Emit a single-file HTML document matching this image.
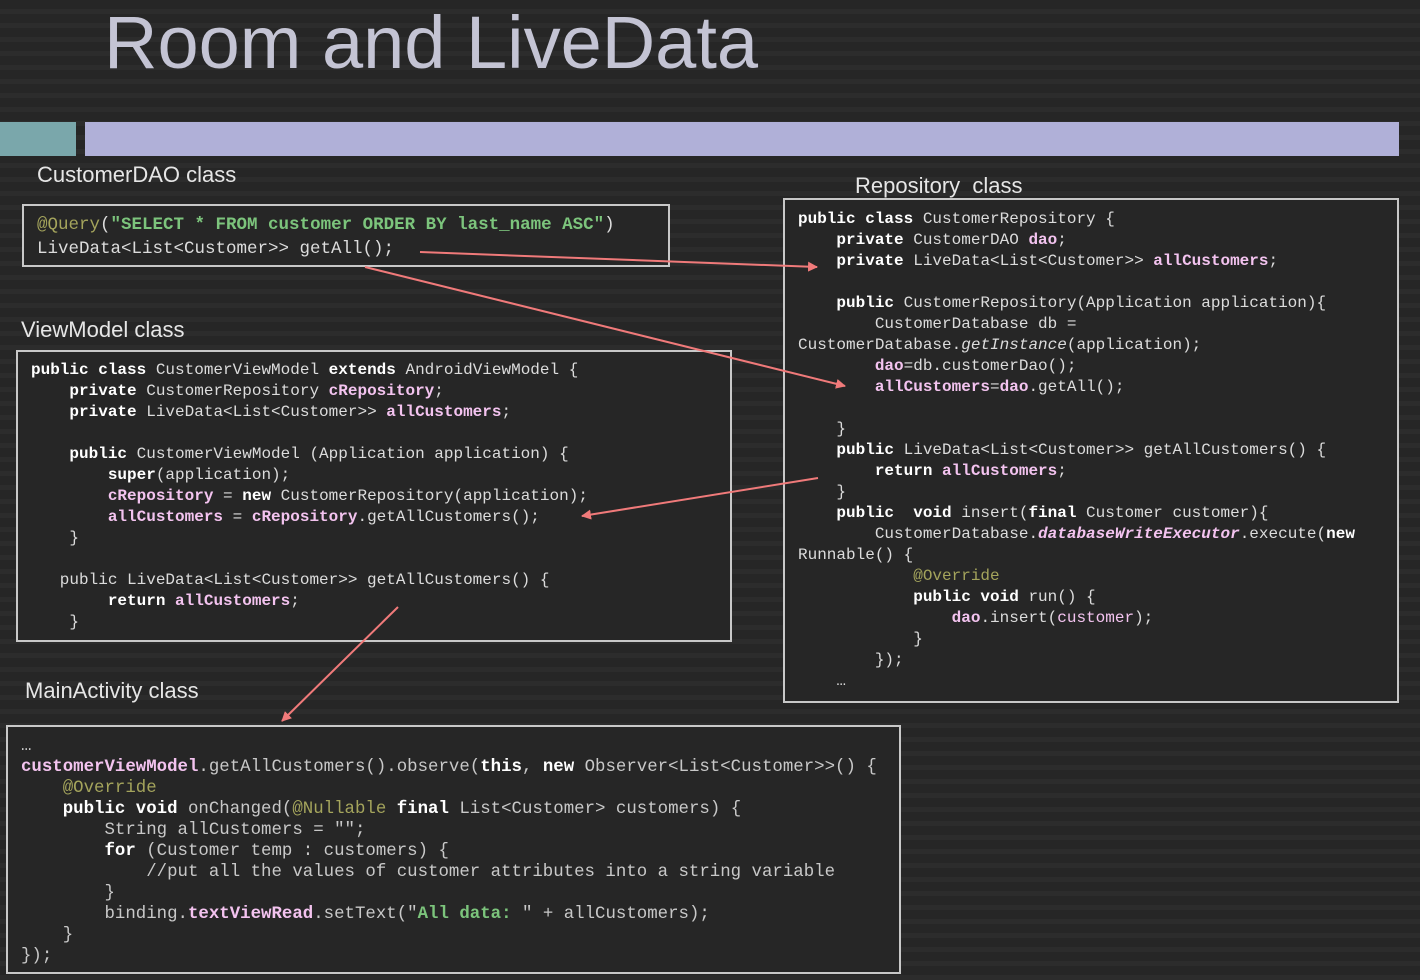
<!DOCTYPE html>
<html><head><meta charset="utf-8"><style>
*{margin:0;padding:0;box-sizing:border-box}
body{width:1420px;height:980px;overflow:hidden;position:relative;
background:repeating-linear-gradient(to bottom,#262626 0px,#262626 9px,#2c2c2c 9px,#2c2c2c 14px);
font-family:"Liberation Sans",sans-serif;}
.title{position:absolute;left:104px;top:0px;font-size:74px;color:#c4c4d4;letter-spacing:0px;white-space:nowrap}
.h{position:absolute;font-size:22px;color:#e6e6e6;white-space:nowrap}
.box{position:absolute;border:2px solid #c8c8c8;background:#262626}
.l{position:absolute;white-space:pre;font-family:"Liberation Mono",monospace;font-size:16px;line-height:21px;color:#dcdcdc}
.m{font-size:17.4px;color:#c8c8c8}
b{color:#fff}
.p{color:#f3c3ef}
.pb{color:#f3c3ef;font-weight:bold}
.g{color:#7cc47c;font-weight:bold}
.a{color:#a4a45c}
i{font-style:italic}
</style></head><body>
<div class="title">Room and LiveData</div>
<div style="position:absolute;left:0;top:122px;width:76px;height:34px;background:#7aa7ab"></div>
<div style="position:absolute;left:85px;top:122px;width:1314px;height:34px;background:#b0b0d8"></div>

<div class="h" style="left:37px;top:162px">CustomerDAO class</div>
<div class="h" style="left:855px;top:173px">Repository&nbsp; class</div>
<div class="h" style="left:21px;top:317px">ViewModel class</div>
<div class="h" style="left:25px;top:678px">MainActivity class</div>

<div class="box" style="left:22px;top:204px;width:648px;height:63px"></div>
<div class="box" style="left:16px;top:350px;width:716px;height:292px"></div>
<div class="box" style="left:783px;top:198px;width:616px;height:505px"></div>
<div class="box" style="left:6px;top:725px;width:895px;height:249px"></div>

<div class="l" style="left:37px;top:213px;font-size:17.5px;line-height:24px"><span class="a">@Query</span>(<span class="g">"SELECT * FROM customer ORDER BY last_name ASC"</span>)
LiveData&lt;List&lt;Customer&gt;&gt; getAll();</div>

<div class="l" style="left:31px;top:360px"><b>public class</b> CustomerViewModel <b>extends</b> AndroidViewModel {
    <b>private</b> CustomerRepository <span class="pb">cRepository</span>;
    <b>private</b> LiveData&lt;List&lt;Customer&gt;&gt; <span class="pb">allCustomers</span>;

    <b>public</b> CustomerViewModel (Application application) {
        <b>super</b>(application);
        <span class="pb">cRepository</span> = <b>new</b> CustomerRepository(application);
        <span class="pb">allCustomers</span> = <span class="pb">cRepository</span>.getAllCustomers();
    }

   public LiveData&lt;List&lt;Customer&gt;&gt; getAllCustomers() {
        <b>return</b> <span class="pb">allCustomers</span>;
    }</div>

<div class="l" style="left:798px;top:209px"><b>public class</b> CustomerRepository {
    <b>private</b> CustomerDAO <span class="pb">dao</span>;
    <b>private</b> LiveData&lt;List&lt;Customer&gt;&gt; <span class="pb">allCustomers</span>;

    <b>public</b> CustomerRepository(Application application){
        CustomerDatabase db =
CustomerDatabase.<i>getInstance</i>(application);
        <span class="pb">dao</span>=db.customerDao();
        <span class="pb">allCustomers</span>=<span class="pb">dao</span>.getAll();

    }
    <b>public</b> LiveData&lt;List&lt;Customer&gt;&gt; getAllCustomers() {
        <b>return</b> <span class="pb">allCustomers</span>;
    }
    <b>public</b>  <b>void</b> insert(<b>final</b> Customer customer){
        CustomerDatabase.<i class="pb">databaseWriteExecutor</i>.execute(<b>new</b>
Runnable() {
            <span class="a">@Override</span>
            <b>public void</b> run() {
                <span class="pb">dao</span>.insert(<span class="p">customer</span>);
            }
        });
    …</div>

<div class="l m" style="left:21px;top:736px">…
<span class="pb">customerViewModel</span>.getAllCustomers().observe(<b>this</b>, <b>new</b> Observer&lt;List&lt;Customer&gt;&gt;() {
    <span class="a">@Override</span>
    <b>public void</b> onChanged(<span class="a">@Nullable</span> <b>final</b> List&lt;Customer&gt; customers) {
        String allCustomers = "";
        <b>for</b> (Customer temp : customers) {
            //put all the values of customer attributes into a string variable
        }
        binding.<span class="pb">textViewRead</span>.setText("<span class="g">All data: </span>" + allCustomers);
    }
});</div>

<svg style="position:absolute;left:0;top:0" width="1420" height="980">
<defs><marker id="ar" markerWidth="10" markerHeight="10" refX="9" refY="5" orient="auto" markerUnits="userSpaceOnUse"><path d="M0,0 L10,5 L0,10 z" fill="#f07a7a"/></marker></defs>
<g stroke="#f07a7a" stroke-width="2" fill="none">
<line x1="420" y1="252" x2="817" y2="267" marker-end="url(#ar)"/>
<line x1="365" y1="267" x2="845" y2="386" marker-end="url(#ar)"/>
<line x1="818" y1="478" x2="582" y2="516" marker-end="url(#ar)"/>
<line x1="398" y1="607" x2="282" y2="721" marker-end="url(#ar)"/>
</g></svg>
</body></html>
